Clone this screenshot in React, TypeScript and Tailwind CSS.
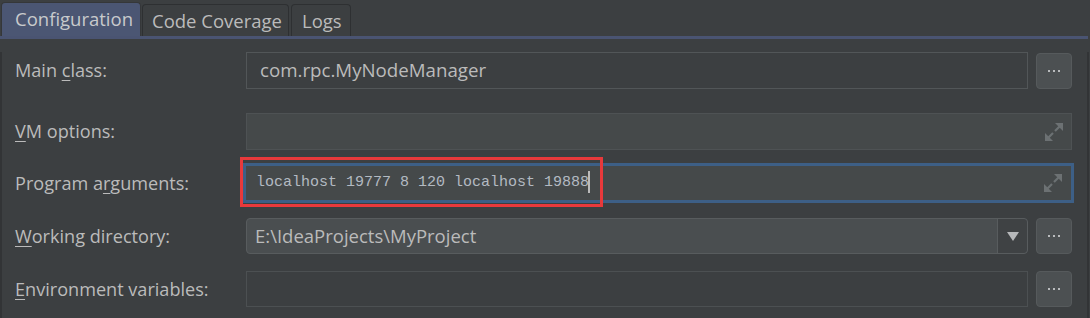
import type { ReactNode } from "react";

const uiFont = { fontFamily: '"Open Sans", "Noto Sans", sans-serif' };
const monoFont = { fontFamily: '"Liberation Mono", "DejaVu Sans Mono", monospace' };

function Mnemonic({ before = "", letter, after }: { before?: string; letter: string; after: string }) {
  return (
    <span>
      {before}
      <span className="underline underline-offset-[3px] decoration-1">{letter}</span>
      {after}
    </span>
  );
}

function ExpandIcon() {
  return (
    <svg width="20" height="20" viewBox="0 0 20 20" className="shrink-0">
      <g fill="#6c7173" stroke="#6c7173">
        <line x1="11" y1="9" x2="16" y2="4" strokeWidth="2.2" />
        <polygon points="19,1 19,9 11,1" stroke="none" />
        <line x1="9" y1="11" x2="4" y2="16" strokeWidth="2.2" />
        <polygon points="1,19 1,11 9,19" stroke="none" />
      </g>
    </svg>
  );
}

function DotsButton() {
  return (
    <button className="w-[36px] h-[36px] shrink-0 rounded-[4px] bg-[#4c5052] border border-[#565a5c] flex items-center justify-center gap-[3px]">
      <span className="w-[2px] h-[2px] bg-[#b9bbbd]" />
      <span className="w-[2px] h-[2px] bg-[#b9bbbd]" />
      <span className="w-[2px] h-[2px] bg-[#b9bbbd]" />
    </button>
  );
}

function Row({ label, children, className = "" }: { label: ReactNode; children: ReactNode; className?: string }) {
  return (
    <div className={`flex items-center ${className}`}>
      <div className="w-[244px] shrink-0 pl-[13px] text-[18.1px] text-[#bbbbbb] leading-none">{label}</div>
      <div className="flex-1 flex items-center pr-[15px]">{children}</div>
    </div>
  );
}

export default function App() {
  return (
    <div className="w-[1090px] h-[318px] bg-[#3c3f41] overflow-hidden relative" style={uiFont}>
      {/* tabs */}
      <div className="flex items-end h-[36px]">
        <div className="w-[140px] h-[34px] ml-[1px] rounded-t-[4px] bg-[#4b5673] border border-b-0 border-[#353739] text-[18.5px] text-[#c8cacc] flex items-center pl-[13px] pb-[2px]">
          Configuration
        </div>
        <div className="w-[147px] h-[32px] ml-[1px] rounded-t-[4px] border border-b-0 border-[#2e3032] text-[18.5px] text-[#bbbbbb] flex items-center pl-[9px]">
          Code Coverage
        </div>
        <div className="w-[60px] h-[32px] ml-[2px] rounded-t-[4px] border border-b-0 border-[#2e3032] text-[18.5px] text-[#bbbbbb] flex items-center pl-[10px]">
          Logs
        </div>
      </div>
      <div className="h-[3px] bg-[#4a5472] mr-[2px]" />

      {/* form */}
      <div className="border-l-2 border-r-2 border-[#323436] h-[279px] mr-[1px]">
        <Row label={<Mnemonic before="Main " letter="c" after="lass:" />} className="mt-[13px]">
          <div className="flex-1 h-[37px] border border-[#525658] bg-[#3c3f41] flex items-center pl-[13px] text-[18.7px] text-[#bbbbbb] mr-[8px]">
            com.rpc.MyNodeManager
          </div>
          <DotsButton />
        </Row>

        <Row label={<Mnemonic letter="V" after="M options:" />} className="mt-[24px]">
          <div className="flex-1 h-[37px] border border-[#4e5254] bg-[#45494a] flex items-center justify-end pr-[7px]">
            <ExpandIcon />
          </div>
        </Row>

        <Row label={<Mnemonic before="Program a" letter="r" after="guments:" />} className="mt-[13px]">
          <div className="flex-1 h-[40px] -ml-[3px] -mr-[2px] border-[3px] border-[#3d5f86] bg-[#45494a] flex items-center pl-[10px] pr-[8px]">
            <span className="text-[15px] text-[#b3bac2] flex-1" style={monoFont}>
              localhost 19777 8 120 localhost 19888
              <span className="inline-block w-[2px] h-[22px] bg-[#bbbbbb] align-middle -ml-[1px]" />
            </span>
            <ExpandIcon />
          </div>
        </Row>

        <Row label={<Mnemonic letter="W" after="orking directory:" />} className="mt-[15px]">
          <div className="flex-1 h-[36px] rounded-[4px] border border-[#585c5e] bg-[#4a4e50] flex items-stretch mr-[8px]">
            <div className="flex-1 flex items-center pl-[8px] text-[18.5px] text-[#bbbbbb]">E:\IdeaProjects\MyProject</div>
            <div className="w-[30px] border-l border-[#585c5e] bg-[#3f4244] rounded-r-[4px] flex items-center justify-center">
              <svg width="12" height="9" viewBox="0 0 12 9">
                <polygon points="0,0 12,0 6,9" fill="#b6b8ba" />
              </svg>
            </div>
          </div>
          <DotsButton />
        </Row>

        <Row label={<Mnemonic letter="E" after="nvironment variables:" />} className="mt-[17px]">
          <div className="flex-1 h-[36px] border border-[#4c5052] bg-[#3c3f41] mr-[8px]" />
          <DotsButton />
        </Row>
      </div>

      {/* annotation */}
      <div className="absolute left-[240px] top-[157px] w-[363px] h-[50px] border-[3px] border-[#e8393b]" />
    </div>
  );
}
